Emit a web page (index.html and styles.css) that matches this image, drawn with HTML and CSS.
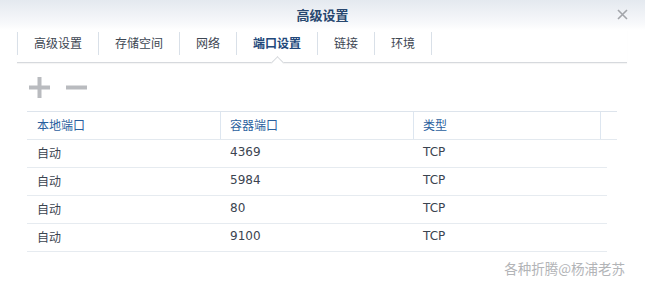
FILE: index.html
```html
<!DOCTYPE html>
<html lang="zh-CN">
<head>
    <meta charset="UTF-8">
    <title>高级设置</title>
    <link rel="stylesheet" href="styles.css">
</head>
<body>
    <div class="window">
        <div class="titlebar">
            <span></span>
            <span class="title">高级设置</span>
            <svg class="close" width="11" height="11" viewBox="0 0 11 11">
                <path d="M1 1 L10 10 M10 1 L1 10" stroke="#a2a5aa" stroke-width="1.6" fill="none"/>
            </svg>
        </div>

        <div class="tabs">
            <a class="tab">高级设置</a>
            <a class="tab">存储空间</a>
            <a class="tab">网络</a>
            <a class="tab active">端口设置</a>
            <a class="tab">链接</a>
            <a class="tab last">环境</a>
        </div>

        <div class="toolbar">
            <svg class="tool" width="21" height="21" viewBox="0 0 21 21">
                <rect x="0" y="8.5" width="21" height="4" fill="#b9bbbf"/>
                <rect x="8.5" y="0" width="4" height="21" fill="#b9bbbf"/>
            </svg>
            <svg class="tool" width="21" height="21" viewBox="0 0 21 21">
                <rect x="0" y="8.5" width="21" height="4" fill="#b9bbbf"/>
            </svg>
        </div>

        <div class="grid">
            <div class="row head">
                <div class="cell">本地端口</div>
                <div class="cell">容器端口</div>
                <div class="cell">类型</div>
                <div class="cell"></div>
            </div>
            <div class="row">
                <div class="cell cjk">自动</div>
                <div class="cell">4369</div>
                <div class="cell">TCP</div>
            </div>
            <div class="row">
                <div class="cell cjk">自动</div>
                <div class="cell">5984</div>
                <div class="cell">TCP</div>
            </div>
            <div class="row">
                <div class="cell cjk">自动</div>
                <div class="cell">80</div>
                <div class="cell">TCP</div>
            </div>
            <div class="row">
                <div class="cell cjk">自动</div>
                <div class="cell">9100</div>
                <div class="cell">TCP</div>
            </div>
        </div>

        <div class="watermark">各种折腾@杨浦老苏</div>
    </div>
</body>
</html>
```

FILE: styles.css
```css
body {
    margin: 0;
    padding: 0;
    background: #fff;
    font-family: "DejaVu Sans", "Noto Sans CJK SC", sans-serif;
    font-size: 12px;
    color: #3b4450;
}
.window {
    width: 645px;
    height: 291px;
    background: #fff;
}
.titlebar {
    height: 30px;
    display: grid;
    grid-template-columns: 1fr auto 1fr;
    align-items: center;
    background: linear-gradient(#e4e9ef, #f8f9fb 80%, #fff);
}
.title {
    font-family: "Noto Sans CJK SC", sans-serif;
    font-size: 13px;
    font-weight: bold;
    color: #27476f;
    line-height: 30px;
}
.close {
    justify-self: end;
    margin: 0 17px 1px 0;
}
.tabs {
    display: flex;
    height: 32px;
    margin: 0 18px 0 17px;
    border-bottom: 1px solid #d6d9dd;
    box-shadow: 0 1px 1px rgba(0, 0, 0, 0.04);
}
.tab {
    position: relative;
    height: 23px;
    margin-top: 2px;
    padding: 0 16px;
    border-left: 1px solid #d9e0e8;
    font-family: "Noto Sans CJK SC", sans-serif;
    font-size: 12px;
    line-height: 22px;
    color: #3d4652;
}
.tab.last {
    border-right: 1px solid #d9e0e8;
}
.tab.active {
    font-weight: bold;
    color: #22487a;
}
.tab.active::after {
    content: "";
    position: absolute;
    left: 50%;
    top: calc(100% + 3px);
    width: 8px;
    height: 8px;
    margin-left: -4px;
    background: #fff;
    border-top: 1px solid #d6d9dd;
    border-left: 1px solid #d6d9dd;
    transform: rotate(45deg);
}
.toolbar {
    display: flex;
    gap: 16px;
    margin: 14px 0 0 29px;
    height: 21px;
}
.grid {
    margin: 13px 0 0 27px;
}
.row {
    display: grid;
    grid-template-columns: 194px 193px 1fr;
    width: 580px;
    height: 27px;
    border-bottom: 1px solid #e6ebf0;
}
.row.head {
    grid-template-columns: 194px 193px 187px 1fr;
    width: 590px;
    border-top: 1px solid #dde4ec;
    border-bottom-color: #e3e9ef;
}
.cell {
    box-sizing: border-box;
    padding-left: 9px;
    line-height: 25px;
    white-space: nowrap;
}
.row .cell:first-child {
    padding-left: 10px;
}
.cjk {
    font-family: "Noto Sans CJK SC", sans-serif;
}
.head .cell {
    font-family: "Noto Sans CJK SC", sans-serif;
    color: #2b5f9e;
    border-right: 1px solid #dde6f0;
}
.head .cell:last-child {
    border-right: none;
}
.watermark {
    margin: 6px 20px 0 0;
    text-align: right;
    font-family: "Noto Sans CJK SC", sans-serif;
    font-size: 13.5px;
    color: #b2b4b7;
}
```
